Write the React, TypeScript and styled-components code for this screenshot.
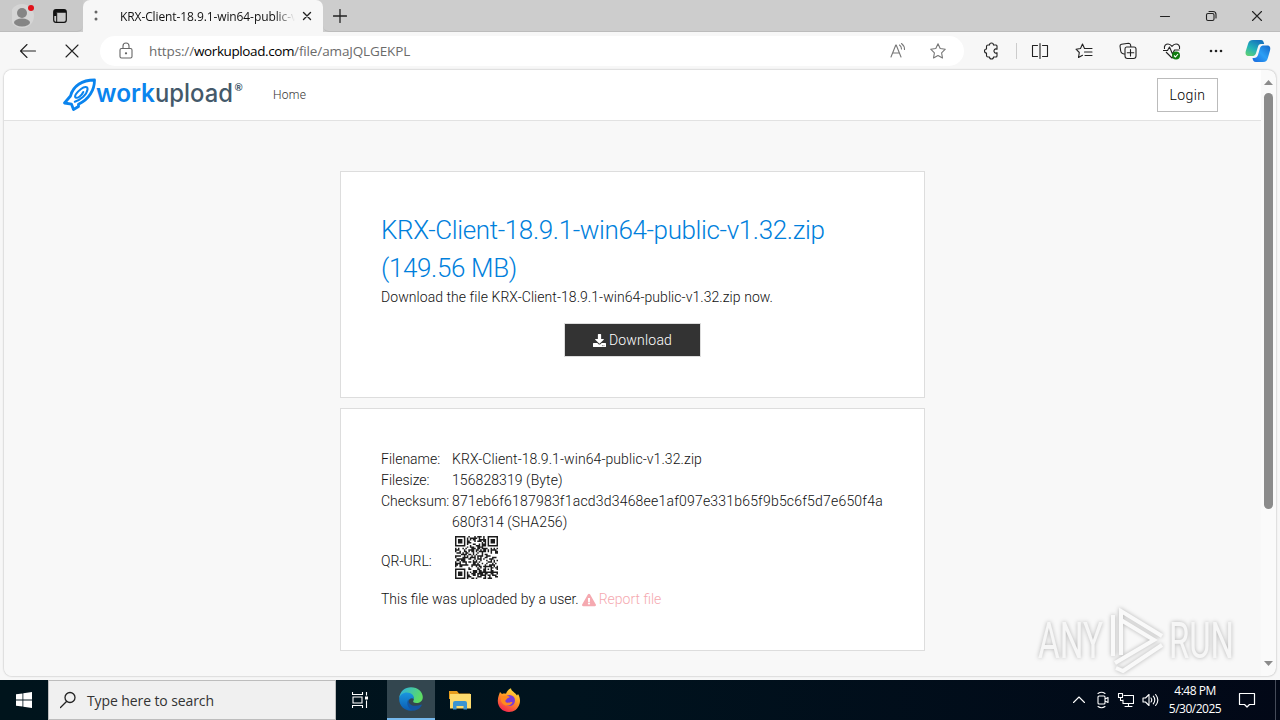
import React from 'react';
import styled, { createGlobalStyle } from 'styled-components';
import { FaDownload, FaExclamationTriangle } from 'react-icons/fa';

const GlobalStyle = createGlobalStyle`
  * {
    box-sizing: border-box;
  }

  body {
    margin: 0;
    overflow: hidden;
    font-family: "Open Sans", "Noto Sans", sans-serif;
  }

  svg {
    display: block;
    flex: none;
  }
`;

const FILE_NAME = 'KRX-Client-18.9.1-win64-public-v1.32.zip';

const Desktop = styled.div`
  width: 1280px;
  height: 720px;
  display: flex;
  flex-direction: column;
  overflow: hidden;
`;

/* browser window */

const BrowserWindow = styled.div`
  height: 680px;
  display: flex;
  flex-direction: column;
  background: #f7f7f7;
`;

const TabStrip = styled.div`
  height: 32px;
  display: flex;
  align-items: stretch;
  background: #cdcdcd;
`;

const TabStripLeft = styled.div`
  width: 83px;
  display: flex;
  align-items: center;
  gap: 18px;
  padding-left: 12px;
  background: #c9c9c9;
  border-bottom: 1px solid #bcbcbc;
  border-radius: 0 0 6px 0;
`;

const Tab = styled.div`
  width: 240px;
  display: flex;
  align-items: center;
  padding-left: 10px;
  background: #f7f7f7;
  border-radius: 7px 7px 0 0;
`;

const TabTitle = styled.span`
  width: 175px;
  margin: 0 7px 0 21px;
  overflow: hidden;
  white-space: nowrap;
  font-size: 12px;
  letter-spacing: -0.1px;
  color: #111;
  mask-image: linear-gradient(90deg, #000 155px, transparent 175px);
`;

const TabStripRest = styled.div`
  flex: 1;
  display: flex;
  align-items: center;
  justify-content: space-between;
  padding: 0 17px 0 10px;
  border-bottom: 1px solid #bcbcbc;
  border-radius: 0 0 0 6px;
`;

const WindowControls = styled.div`
  display: flex;
  align-items: center;
  gap: 34px;
`;

const Toolbar = styled.div`
  height: 38px;
  display: flex;
  align-items: center;
  padding: 0 9px 0 19px;
`;

const NavIcons = styled.div`
  width: 81px;
  display: flex;
  align-items: center;
  gap: 26px;
`;

const AddressBar = styled.div`
  width: 864px;
  height: 30px;
  display: flex;
  align-items: center;
  padding: 0 17px;
  background: #fff;
  border-radius: 15px;
`;

const Url = styled.span`
  flex: 1;
  margin-left: 14px;
  font-size: 13.5px;
  letter-spacing: -0.13px;
  color: #6b6b6b;

  b {
    font-weight: 400;
    letter-spacing: -0.4px;
    color: #000;
  }
`;

const AddressIcons = styled.div`
  display: flex;
  gap: 22px;
`;

const ToolIcons = styled.div`
  flex: 1;
  display: flex;
  align-items: center;
  gap: 26px;
  margin-left: 18px;

  > :last-child {
    margin-left: -6px;
  }
`;

const Separator = styled.div`
  width: 1px;
  height: 16px;
  margin: 0 -12px 0 -10px;
  background: #ccc;
`;

/* page */

const PageFrame = styled.div`
  position: relative;
  height: 606px;
  margin: 0 4px;
  display: flex;
  overflow: hidden;
  background: #fafafa;
  border-radius: 8px;
  box-shadow: 0 0 2px rgba(0, 0, 0, 0.35);
`;

const Page = styled.div`
  width: 1257px;
  display: flex;
  flex-direction: column;
  background: #f8f8f8;
  font-family: Roboto, sans-serif;
  font-weight: 300;
  font-size: 14px;
  line-height: 21px;
  color: #111;
`;

const SiteHeader = styled.header`
  height: 51px;
  flex: none;
  display: flex;
  align-items: center;
  padding: 0 43px 0 58px;
  background: #fff;
  border-bottom: 1px solid #e2e2e2;
`;

const HomeLink = styled.a`
  flex: 1;
  margin-left: 27px;
  font-size: 12px;
  letter-spacing: 0.3px;
  color: #333;
`;

const LoginButton = styled.button`
  width: 61px;
  height: 34px;
  padding: 0;
  background: #fff;
  border: 1px solid #bbb;
  font: 300 14px Roboto, sans-serif;
  letter-spacing: 0.4px;
  color: #000;
`;

const Main = styled.main`
  display: flex;
  flex-direction: column;
  align-items: center;
  gap: 10px;
  padding-top: 50px;
`;

const Card = styled.section<{ $height: number, $top?: number }>`
  width: 585px;
  height: ${({ $height }) => $height}px;
  padding: ${({ $top = 40 }) => $top}px 40px 0;
  background: #fff;
  border: 1px solid #ddd;
`;

const Title = styled.h1`
  margin: 0;
  font-size: 26px;
  font-weight: 300;
  line-height: 38px;
  letter-spacing: -0.37px;
  color: #0080dc;
`;

const Line = styled.p`
  margin: 0;
  letter-spacing: 0.06px;
  white-space: nowrap;
`;

const Notice = styled.div`
  display: flex;
  align-items: center;
  gap: 3px;
`;

const DownloadButton = styled.button`
  width: 137px;
  height: 34px;
  margin: 15px 0 0 183px;
  padding: 0;
  display: flex;
  align-items: center;
  justify-content: center;
  gap: 3px;
  background: #333;
  border: 1px solid #ddd;
  font: 300 14px Roboto, sans-serif;
  letter-spacing: 0.2px;
  color: #fff;
`;

const Details = styled.dl`
  margin: 0 0 7px;
  display: grid;
  grid-template-columns: 71px 1fr;
  grid-template-rows: 21px 21px 42px 49px;

  dt,
  dd {
    margin: 0;
    white-space: nowrap;
  }

  dd {
    letter-spacing: 0.08px;
  }
`;

const Hash = styled.span`
  letter-spacing: 0.2px;
`;

const QrLabel = styled.dt`
  padding-top: 18px;
`;

const QrCell = styled.dd`
  padding: 3px;
`;

const ReportLink = styled.a`
  display: flex;
  align-items: center;
  gap: 3px;
  color: #f5a9b0;
`;

const Scrollbar = styled.div`
  width: 15px;
  display: flex;
  flex-direction: column;
  align-items: center;
  padding: 10px 0 10px;
`;

const Thumb = styled.div`
  width: 9px;
  height: 416px;
  margin: 8px 0 auto;
  background: #8b8b8b;
  border-radius: 5px;
`;

const Watermark = styled.div`
  position: absolute;
  left: 1028px;
  top: 533px;
`;

/* taskbar */

const Taskbar = styled.div`
  height: 40px;
  display: flex;
  background: linear-gradient(90deg, #00141c, #00131e 45%, #020817);
  color: #fff;
`;

const TaskButton = styled.div<{ $width?: number; $active?: boolean }>`
  width: ${({ $width = 49 }) => $width}px;
  height: 40px;
  display: flex;
  align-items: center;
  justify-content: center;
  background: ${({ $active }) => ($active ? '#33464f' : 'transparent')};
  border-bottom: ${({ $active }) => ($active ? '2px solid #76b9ed' : 'none')};
`;

const SearchBox = styled.div`
  width: 288px;
  height: 40px;
  display: flex;
  align-items: center;
  gap: 11px;
  padding-left: 11px;
  background: #f0f0f0;
  border: 1px solid #bdbdbd;
  font-size: 14px;
  letter-spacing: -0.1px;
  color: #333;
`;

const Tray = styled.div`
  margin-left: auto;
  display: flex;
  align-items: center;
`;

const TrayIcons = styled.div`
  display: flex;
  align-items: center;
  gap: 8px;
`;

const Clock = styled.div`
  width: 72px;
  margin-right: 7px;
  text-align: center;
  font-size: 12px;
  line-height: 18px;
  letter-spacing: -0.5px;
`;

const ShowDesktop = styled.div`
  width: 5px;
  height: 40px;
  margin-left: 19px;
  border-left: 1px solid #454b59;
`;

/* generic line icon, drawn on its own pixel grid */
const Icon = ({ d, w = 18, h = 18, color = '#222', sw = 1.1 }: { d: string, w?: number, h?: number, color?: string, sw?: number }) => (
    <svg width={w} height={h} viewBox={`0 0 ${w} ${h}`} fill="none" stroke={color} strokeWidth={sw} strokeLinecap="round" strokeLinejoin="round">
        <path d={d} />
    </svg>
);

const STAR = 'M9 1.8l2.2 4.7 5.1.7-3.7 3.6.9 5.2L9 13.5 4.5 16l.9-5.2L1.7 7.2l5.1-.7z';

const QR_SIZE = 29;

const finderAt = (x: number, y: number, left: number, top: number) => {
    const dx = x - left;
    const dy = y - top;
    if (dx < -1 || dy < -1 || dx > 7 || dy > 7) return null;
    const ring = Math.max(Math.abs(dx - 3), Math.abs(dy - 3));
    return ring === 3 || ring <= 1;
};

const isDark = (x: number, y: number) => {
    const corners = [[0, 0], [QR_SIZE - 7, 0], [0, QR_SIZE - 7]];
    for (const [left, top] of corners) {
        const hit = finderAt(x, y, left, top);
        if (hit !== null) return hit;
    }
    const ring = Math.max(Math.abs(x - 22), Math.abs(y - 22));
    if (ring <= 2) return ring !== 1;
    return ((x * 73 + y * 151 + x * y * 37 + ((x * x * 11) ^ (y * y * 7))) % 17) < 9;
};

const QrCode = () => {
    let d = '';
    for (let y = 0; y < QR_SIZE; y++) {
        for (let x = 0; x < QR_SIZE; x++) {
            if (isDark(x, y)) d += `M${x} ${y}h1v1h-1z`;
        }
    }
    return (
        <svg width="43" height="43" viewBox={`0 0 ${QR_SIZE} ${QR_SIZE}`}>
            <path d={d} fill="#1c1c1c" />
        </svg>
    );
};

const Logo = () => (
    <svg width="184" height="36" viewBox="0 0 184 36">
        <g fill="none" stroke="#0a84ee" strokeWidth="2.8" strokeLinejoin="round" strokeLinecap="round">
            <path d="M8.500 19C11 9 20 3 32.500 3C32.500 13 27 22.500 16.500 27.200L16.500 29.500L11.500 32.500L9.500 27.200L2.500 26L8.500 19" />
            <path d="M12.800 24.800C18 23 25 18 25.600 12.200C25.600 9.500 22.500 9.300 19 12C14.500 15.500 12 19 13.500 20.500C15.500 22 20 18 21.300 15" strokeWidth="2" />
        </g>
        <text y="24.500" fontFamily="Inter, sans-serif" fontSize="25" fontWeight="600">
            <tspan x="34" fill="#0a84ee" textLength="59" lengthAdjust="spacingAndGlyphs">work</tspan>
            <tspan x="93" fill="#44596a" fontWeight="500" textLength="78" lengthAdjust="spacingAndGlyphs">upload</tspan>
        </text>
        <text x="172.500" y="13.500" fontFamily="Lato, sans-serif" fontSize="10" fontWeight="700" fill="#44596a">®</text>
    </svg>
);

const AnyRun = () => (
    <svg width="240" height="70" viewBox="0 0 240 70" style={{ filter: 'drop-shadow(0 0 2px rgba(0,0,0,.28))' }}>
        <g fill="#f6f6f6" fontFamily="Roboto, sans-serif" fontWeight="400" fontSize="50">
            <text x="6" y="55" textLength="65" lengthAdjust="spacingAndGlyphs">ANY</text>
            <text x="137" y="55" textLength="65" lengthAdjust="spacingAndGlyphs">RUN</text>
        </g>
        <path d="M81 53V12M89 52V8L130 33M89 17L122 37L83 60M84 65L91 68L130 42" fill="none" stroke="#f9f9f9" strokeWidth="4" />
    </svg>
);

const Profile = () => (
    <svg width="23" height="26" viewBox="0 0 23 26">
        <circle cx="10" cy="13" r="12" fill="#d5d5d5" />
        <circle cx="10" cy="10" r="5" fill="#858585" />
        <ellipse cx="10" cy="19.500" rx="8" ry="4" fill="#858585" />
        <circle cx="19" cy="5" r="3" fill="#e1121b" />
    </svg>
);

const WorkspaceIcon = () => (
    <svg width="14" height="14" viewBox="0 0 14 14">
        <rect x=".7" y=".7" width="12.600" height="12.600" rx="2.300" fill="none" stroke="#111" strokeWidth="1.200" />
        <path d="M1 1h12v2.800H3.500V7H1z" fill="#111" />
        <path d="M3.700 4v9" stroke="#111" />
    </svg>
);

const HealthIcon = () => (
    <svg width="18" height="18" viewBox="0 0 18 18" fill="none" stroke="#222" strokeWidth="1.100" strokeLinejoin="round">
        <path d="M1.500 7C.8 3.500 3 2 5 2s3 1 4 2.300C10 3 11 2 13 2s4.200 1.500 3.500 5M3 10l6 6 1-1M0 8.500h4.500L6.500 5l3 7 2-4h5" />
        <circle cx="13" cy="13.500" r="4" fill="#107c10" stroke="none" />
        <path d="M11 13.500l1.500 1.500 2.500-3" stroke="#fff" />
    </svg>
);

const Copilot = () => (
    <svg width="26" height="24" viewBox="0 0 26 24">
        <defs>
            <linearGradient id="copLeft" x1="0" y1="1" x2=".6" y2="0">
                <stop offset="0" stopColor="#69d56b" />
                <stop offset=".5" stopColor="#23b3b8" />
                <stop offset="1" stopColor="#1675bd" />
            </linearGradient>
            <linearGradient id="copRight" x1="1" y1="0" x2="0" y2="1">
                <stop offset="0" stopColor="#1467c8" />
                <stop offset=".5" stopColor="#2b9ff5" />
                <stop offset="1" stopColor="#1767dd" />
            </linearGradient>
        </defs>
        <path d="M8 1h8c2 0 2.500 1.500 3.200 4h-3c-2 0-2.800 1-3.300 3l-2 6.500C10 16.500 9 17 7 17H4c-3 0-4-2-3.200-5L3 5c.8-2.500 2-4 5-4z" fill="url(#copLeft)" />
        <path d="M18 23h-7c-2.500 0-3-1.500-3.500-4H9c2 0 3.300-1 4-3l2-7C15.700 7 17 6.500 19 6.500h3c3 0 3.800 2 3 5l-2 7c-.8 3-2 4.500-5 4.500z" fill="url(#copRight)" />
    </svg>
);

const EdgeLogo = () => (
    <svg width="24" height="24" viewBox="0 0 24 24">
        <defs>
            <linearGradient id="edgeTop" x1="0" y1="0" x2="1" y2=".4">
                <stop offset="0" stopColor="#2aaee8" />
                <stop offset="1" stopColor="#5ddc63" />
            </linearGradient>
            <linearGradient id="edgeSide" x1="0" y1="0" x2="0" y2="1">
                <stop offset="0" stopColor="#1996df" />
                <stop offset="1" stopColor="#0c5bb0" />
            </linearGradient>
        </defs>
        <path d="M.2 11C1 4 6 .2 12 .2c7 0 11.800 4.800 11.800 9.800 0 4-3 6-6.300 6-3 0-4-1.200-3-2.500C16 11 13 7 9 7 5 7 1.500 9 .2 11z" fill="url(#edgeTop)" />
        <path d="M.2 12c0-4 4-6.500 7.800-6.500 4.500 0 7.500 3.500 6.800 6.500C13 10 9 12 9 16c0 3 3 7 7 7C8 26 0 20 .2 12z" fill="url(#edgeSide)" />
        <path d="M9.500 12c-3 4.500 0 11 5.500 11.500 3 0 6.500-2.500 7.700-5.300.3-.6-.2-.8-.8-.5C15 20.500 8.500 18 9.500 12z" fill="#1455a3" />
    </svg>
);

const FolderIcon = () => (
    <svg width="22" height="20" viewBox="0 0 22 20">
        <path d="M0 1h8l2 2.500h11V9H0z" fill="#e69d1c" />
        <path d="M1 4h21v14.500H1z" fill="#fddb6d" />
        <path d="M4 19.500V13q0-2 2-2h10q2 0 2 2v6.500h-3.500V16h-7v3.500z" fill="#3a94d1" />
    </svg>
);

const FirefoxIcon = () => (
    <svg width="24" height="24" viewBox="0 0 24 24">
        <defs>
            <linearGradient id="fox" x1=".8" y1="0" x2=".3" y2="1">
                <stop offset="0" stopColor="#ffe544" />
                <stop offset=".45" stopColor="#ff9a24" />
                <stop offset="1" stopColor="#f5234f" />
            </linearGradient>
        </defs>
        <path d="M3 4l2 2c1-.5 3-.5 4-.3C10 3 12 1 14 .3c0 3 4.500 4.200 6 7.200L21 6c2 3 2.500 7 1.500 10C21 21 17 24 12 24 5.500 24 .5 19 .8 12.500 1 9 2 6.500 3 4z" fill="url(#fox)" />
        <circle cx="12.500" cy="12.500" r="5.500" fill="#7a3bd7" />
        <path d="M4 9c3-2 7-1.500 9 0-1 .7-3 1-3.500 2.500C8 12 8 14 9.500 14.500c2 1 4-1 6-.5-1 3-4 4-7 3.500C5 16.500 3 13 4 9z" fill="#ff8a1e" />
    </svg>
);

const App = () => (
    <Desktop>
        <GlobalStyle />
        <BrowserWindow>
            <TabStrip>
                <TabStripLeft>
                    <Profile />
                    <WorkspaceIcon />
                </TabStripLeft>
                <Tab>
                    <svg width="6" height="12" viewBox="0 0 6 12" fill="#666">
                        <circle cx="3" cy="2" r="1.500" />
                        <circle cx="3" cy="9" r="1.500" />
                    </svg>
                    <TabTitle>{FILE_NAME}</TabTitle>
                    <Icon w={10} h={10} sw={1.4} d="M1.500 1.500l7 7M8.500 1.500l-7 7" />
                </Tab>
                <TabStripRest>
                    <Icon w={14} h={14} sw={1.3} d="M7 .5v13M.5 7h13" />
                    <WindowControls>
                        <Icon w={12} h={12} d="M1.500 6.500h9" />
                        <Icon w={12} h={12} d="M3 3.500h4.500q1.500 0 1.500 1.500v4q0 1.500-1.500 1.500H3Q1.500 10.500 1.500 9V5Q1.500 3.500 3 3.500zM4 1.500h4q3 0 3 3V8" />
                        <Icon w={12} h={12} d="M1.500 1.500l9 9M10.500 1.500l-9 9" />
                    </WindowControls>
                </TabStripRest>
            </TabStrip>

            <Toolbar>
                <NavIcons>
                    <Icon d="M16.500 9h-15M8 2.500L1.500 9 8 15.500" />
                    <Icon d="M3 3l12 12M15 3L3 15" />
                </NavIcons>
                <AddressBar>
                    <svg width="18" height="18" viewBox="0 0 18 18" fill="none" stroke="#666" strokeWidth="1.100">
                        <rect x="3" y="6.500" width="12" height="9.500" rx="1.500" />
                        <path d="M6 6.500V4a3 3 0 0 1 6 0v2.500" />
                        <circle cx="9" cy="11.300" r=".6" fill="#666" />
                    </svg>
                    <Url>https://<b>workupload.com</b>/file/amaJQLGEKPL</Url>
                    <AddressIcons>
                        <Icon color="#777" d="M2 15L6.800 3h.4L12 15M3.700 11h6.600M10.500 3q2 1.500 2 4M12.500 1.500q3.200 2.500 3 6" />
                        <Icon color="#777" d={STAR} />
                    </AddressIcons>
                </AddressBar>
                <ToolIcons>
                    <Icon d="M6 3h1.500a2 2 0 0 1 4 0H14q1 0 1 1v3.300a2 2 0 1 0 0 3.400V14q0 1-1 1h-2.500a2 2 0 0 1-4 0H6q-1.500 0-1.500-1.500V11a2 2 0 0 1 0-4V4.500Q4.500 3 6 3z" />
                    <Separator />
                    <Icon d="M9 1.500v15M6.500 3.500h-5v11h5M11.500 3.500h5v11h-5" />
                    <Icon d="M9.500 6.500L7.500 2 5.500 6.500l-4.500.7 3.300 3.300-.8 5 4-2.200M10 6.500h7M9.500 10h7.500M10 13.500h7" />
                    <Icon d="M5 12L3.500 11.500Q2 11 1.700 9L1 4q0-1.500 1.500-1.800l7-1q1.500 0 2 1.500l.3 1.800M7.500 5h7.500Q17 5 17 7v7q0 2.500-2.500 2.500h-6Q6 16.500 6 14V7Q6 5 7.500 5zM11.500 7.500v6.500M8.300 10.700h6.500" />
                    <HealthIcon />
                    <svg width="18" height="18" viewBox="0 0 18 18" fill="#222">
                        <circle cx="4" cy="9" r="1.300" />
                        <circle cx="9" cy="9" r="1.300" />
                        <circle cx="14" cy="9" r="1.300" />
                    </svg>
                    <Copilot />
                </ToolIcons>
            </Toolbar>

            <PageFrame>
                <Page>
                    <SiteHeader>
                        <Logo />
                        <HomeLink>Home</HomeLink>
                        <LoginButton>Login</LoginButton>
                    </SiteHeader>
                    <Main>
                        <Card $height={227} $top={39}>
                            <Title>{FILE_NAME} (149.56 MB)</Title>
                            <Line>Download the file {FILE_NAME} now.</Line>
                            <DownloadButton>
                                <FaDownload size={13} />
                                Download
                            </DownloadButton>
                        </Card>
                        <Card $height={243}>
                            <Details>
                                <dt>Filename:</dt>
                                <dd>{FILE_NAME}</dd>
                                <dt>Filesize:</dt>
                                <dd>156828319 (Byte)</dd>
                                <dt>Checksum:</dt>
                                <dd>
                                    <Hash>871eb6f6187983f1acd3d3468ee1af097e331b65f9b5c6f5d7e650f4a</Hash>
                                    <br />
                                    680f314 (SHA256)
                                </dd>
                                <QrLabel>QR-URL:</QrLabel>
                                <QrCell>
                                    <QrCode />
                                </QrCell>
                            </Details>
                            <Notice>
                                <span>This file was uploaded by a user.</span>
                                <ReportLink>
                                    <FaExclamationTriangle size={14} />
                                    Report file
                                </ReportLink>
                            </Notice>
                        </Card>
                    </Main>
                </Page>
                <Scrollbar>
                    <svg width="9" height="5" viewBox="0 0 9 5" fill="#8b8b8b"><path d="M0 5l4.500-5L9 5z" /></svg>
                    <Thumb />
                    <svg width="9" height="5" viewBox="0 0 9 5" fill="#8b8b8b"><path d="M0 0l4.500 5L9 0z" /></svg>
                </Scrollbar>
                <Watermark>
                    <AnyRun />
                </Watermark>
            </PageFrame>
        </BrowserWindow>

        <Taskbar>
            <TaskButton $width={48}>
                <svg width="16" height="16" viewBox="0 0 16 16" fill="#fff">
                    <path d="M0 2.300L6.500 1.400V7.600H0zM7.300 1.300L16 0v7.600H7.300zM0 8.400h6.500v6.200L0 13.700zM7.300 8.400H16V16l-8.700-1.300z" />
                </svg>
            </TaskButton>
            <SearchBox>
                <Icon w={16} h={18} sw={1.3} color="#222" d="M6.500 10.500L0.500 16.500M15 6.500a5 5 0 1 1-10 0a5 5 0 1 1 10 0" />
                Type here to search
            </SearchBox>
            <TaskButton $width={51}>
                <svg width="19" height="16" viewBox="0 0 19 16" fill="none" stroke="#fff" strokeWidth="1.100">
                    <path d="M.5 0v2.500h10V0M.5 16v-2.500h10V16M1 5h9v6H1zM14.500 0v3.500M14.500 8.500V16" />
                    <path d="M13 4.500h3v3h-3z" fill="#fff" stroke="none" />
                </svg>
            </TaskButton>
            <TaskButton $width={48} $active>
                <EdgeLogo />
            </TaskButton>
            <TaskButton>
                <FolderIcon />
            </TaskButton>
            <TaskButton>
                <FirefoxIcon />
            </TaskButton>
            <Tray>
                <TrayIcons>
                    <Icon w={12} h={8} color="#fff" d="M.5 6.500L6 1l5.500 5.500" />
                    <Icon w={16} h={18} color="#fff" d="M6 5h5q1 0 1 1v6q0 1-1 1H6q-1 0-1-1V6q0-1 1-1zM12 8l3-1.500v5L12 10M5 2.500Q8.500 0 12 2.500M5 15.500Q8.500 18 12 15.500" />
                    <Icon w={17} h={16} color="#fff" d="M7 3.500h9.500v8H6V8M11.500 11.500v3M8 14.500h7M1.500 1.500h4v4h-4zM3.500 5.500v3H6" />
                    <Icon w={17} h={14} color="#fff" d="M1 5h2.500L7 1.500v11L3.500 9H1zM9 5q1.500 2 0 4M11.300 3.200q3 3.800 0 7.600M13.600 1.500q4.500 5.500 0 11" />
                </TrayIcons>
                <Clock>
                    4:48 PM
                    <br />
                    5/30/2025
                </Clock>
                <Icon w={18} h={18} color="#fff" sw={1.2} d="M1.500 2.500h15v11h-5L9 16l-2.500-2.500h-5z" />
                <ShowDesktop />
            </Tray>
        </Taskbar>
    </Desktop>
);

export default App;
